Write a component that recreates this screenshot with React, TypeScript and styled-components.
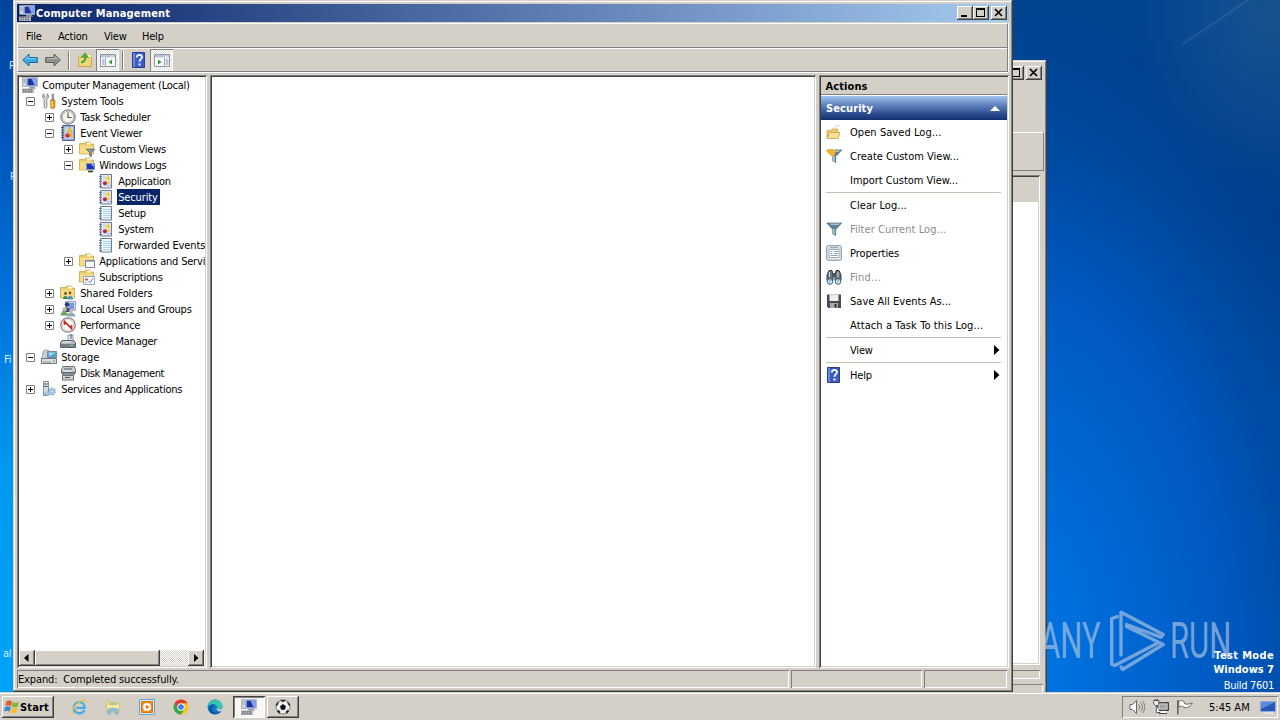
import React from "react";
import styled, { createGlobalStyle, css } from "styled-components";

const face = "#d4d0c8";
const shadow = "#808080";
const dark = "#404040";

const GlobalStyle = createGlobalStyle`
  * { box-sizing: border-box; }
  body {
    margin: 0;
    overflow: hidden;
    font: 11px "DejaVu Sans Condensed", "DejaVu Sans", sans-serif;
    letter-spacing: -0.22px;
    color: #000;
    cursor: default;
  }
  svg { display: block; flex: none; }
`;

const raised = css`
  background: ${face};
  box-shadow: inset -1px -1px ${dark}, inset 1px 1px #fff, inset -2px -2px ${shadow};
`;
const sunken = css`
  box-shadow: inset 1px 1px ${shadow}, inset -1px -1px #fff;
`;
const well = css`
  padding: 2px;
  box-shadow: inset 1px 1px ${shadow}, inset -1px -1px #fff, inset 2px 2px ${dark}, inset -2px -2px ${face};
`;

const Desktop = styled.div`
  position: relative;
  width: 1280px;
  height: 720px;
  overflow: hidden;
  background:
    linear-gradient(146deg, transparent 49%, rgba(255, 255, 255, 0.12) 49.6%, rgba(255, 255, 255, 0.02) 52%, transparent 56%) 1180px 0 / 70px 44px no-repeat,
    radial-gradient(ellipse 130px 170px at 1270px 20px, rgba(50, 100, 140, 0.45), rgba(50, 100, 140, 0)),
    radial-gradient(ellipse 360px 660px at 1010px 670px, #0078e6 0%, #0069d6 30%, #005cc4 55%, rgba(0, 78, 172, 0.7) 78%, rgba(0, 68, 150, 0) 100%),
    linear-gradient(180deg, #004490 0%, #003f8c 30%, #0050ac 100%);
`;
const LeftStrip = styled.div`
  width: 14px;
  height: 100%;
  background: linear-gradient(180deg, #00449c 0, #0050b4 15%, #0070d8 40%, #0098f0 65%, #00a4fa 100%);
`;

const Shortcut = styled.span<{ $x: number; $y: number }>`
  position: absolute;
  left: ${(p) => p.$x}px;
  top: ${(p) => p.$y}px;
  color: #d8ecff;
  line-height: 14px;
`;

/* windows */
const Window = styled.section<{ $x: number; $y: number; $w: number; $h: number }>`
  position: absolute;
  left: ${(p) => p.$x}px;
  top: ${(p) => p.$y}px;
  width: ${(p) => p.$w}px;
  height: ${(p) => p.$h}px;
  display: flex;
  flex-direction: column;
  padding: 4px;
  background: ${face};
  box-shadow: inset -1px -1px ${dark}, inset 1px 1px ${face}, inset -2px -2px ${shadow}, inset 2px 2px #fff;
`;

const TitleBar = styled.header<{ $plain?: boolean }>`
  display: flex;
  align-items: center;
  height: 18px;
  flex: none;
  padding: 0 ${(p) => (p.$plain ? 1 : 2)}px 0 2px;
  color: #fff;
  font-weight: bold;
  letter-spacing: 0.16px;
  background: ${(p) => (p.$plain ? face : "linear-gradient(90deg, #0a246a, #a6caf0)")};
`;
const TitleText = styled.span`
  flex: 1;
  margin-left: 1px;
`;
const CaptionButton = styled.span<{ $gap?: number }>`
  ${raised}
  width: 16px;
  height: 14px;
  margin-left: ${(p) => p.$gap ?? 0}px;
`;

const Bars = styled.div`
  flex: none;
  height: 49px;
  margin: 1px 1px 0 0;
  border: 1px solid;
  border-color: #fff ${shadow} ${shadow} #fff;
  box-shadow: 0 1px #fff, 1px 0 #fff;
  display: flex;
  flex-direction: column;
`;
const MenuBar = styled.nav`
  display: flex;
  align-items: center;
  height: 24px;
  padding: 2px 0 0 8px;
  border-bottom: 1px solid ${shadow};
`;
const MenuItem = styled.span<{ $w: number }>`
  width: ${(p) => p.$w}px;
`;
const ToolBar = styled.div`
  display: flex;
  align-items: flex-start;
  flex: 1;
  padding-left: 4px;
  border-top: 1px solid #fff;
`;
const Tool = styled.span<{ $pressed?: boolean; $w: number }>`
  display: flex;
  align-items: center;
  justify-content: center;
  width: ${(p) => p.$w}px;
  height: 22px;
  ${(p) => p.$pressed && css`
    background: repeating-conic-gradient(#fff 0 25%, #e4e1dc 0 50%) 0 0 / 2px 2px;
    ${sunken}
  `}
`;
const ToolDivider = styled.i<{ $l: number; $r: number }>`
  width: 2px;
  height: 19px;
  margin: 2px ${(p) => p.$r}px 0 ${(p) => p.$l}px;
  border-left: 1px solid ${shadow};
  border-right: 1px solid #fff;
`;

const Panes = styled.main`
  display: grid;
  grid-template-columns: 190px 606px 190px;
  column-gap: 3px;
  height: 593px;
  margin-top: 3px;
  flex: none;
`;
const Pane = styled.div`
  ${well}
  background: #fff;
  display: flex;
  flex-direction: column;
  min-width: 0;
  overflow: hidden;
`;
const TreeList = styled.ul`
  list-style: none;
  margin: 0;
  padding: 0;
  flex: 1;
  overflow: hidden;
`;
const TreeRow = styled.li<{ $level: number }>`
  display: flex;
  align-items: center;
  height: 16px;
  padding-left: ${(p) => (p.$level === 0 ? 3 : 3 + 19 * (p.$level - 1))}px;
  white-space: nowrap;
`;
const Twist = styled.span`
  width: 19px;
  padding-left: 4px;
  flex: none;
`;
const TreeLabel = styled.span<{ $selected?: boolean; $track?: number }>`
  margin-left: 3px;
  padding: 1px 2px 0 1.2px;
  line-height: 15px;
  letter-spacing: ${(p) => p.$track ?? -0.24}px;
  ${(p) => p.$selected && css`
    background: #0a246a;
    color: #fff;
  `}
`;
const ScrollBar = styled.div`
  display: flex;
  height: 16px;
  margin: 0 1px 0 0;
  background: repeating-conic-gradient(#fff 0 25%, ${face} 0 50%) 0 0 / 2px 2px;
`;
const ScrollButton = styled.span`
  ${raised}
  width: 16px;
  height: 16px;
`;
const Thumb = styled.span`
  ${raised}
  width: 125px;
`;
const TrackSpace = styled.span`
  flex: 1;
`;

const ActionsTitle = styled.div`
  height: 18px;
  padding: 1px 0 0 4.5px;
  font-weight: bold;
  letter-spacing: 0.1px;
  line-height: 17px;
  background: ${face};
  border-bottom: 1px solid ${shadow};
`;
const ActionsGroup = styled.div`
  display: flex;
  align-items: center;
  justify-content: space-between;
  height: 25px;
  padding: 1px 7px 0 5px;
  color: #fff;
  font-weight: bold;
  letter-spacing: 0.1px;
  border-top: 1px solid #fff;
  background: linear-gradient(180deg, #a0c4ee 0%, #6487c0 35%, #2c4c90 75%, #14306f 100%);
`;
const ActionRow = styled.div<{ $disabled?: boolean }>`
  display: flex;
  align-items: center;
  height: 24px;
  padding: 0 7px 0 5px;
  color: ${(p) => (p.$disabled ? "#8c8c8c" : "#000")};
`;
const ActionIcon = styled.span`
  width: 24px;
`;
const ActionText = styled.span<{ $track?: number }>`
  flex: 1;
  letter-spacing: ${(p) => p.$track ?? -0.2}px;
`;
const Rule = styled.i`
  height: 1px;
  margin: 0 6px 0 5px;
  background: #c4c0b8;
`;

const StatusBar = styled.footer`
  display: flex;
  gap: 2px;
  height: 19px;
  margin-top: 1px;
  padding-top: 1px;
  flex: none;
`;
const StatusCell = styled.span<{ $w: number }>`
  ${sunken}
  width: ${(p) => p.$w}px;
  padding: 1px 0 0 1px;
  line-height: 17px;
  letter-spacing: -0.14px;
`;

/* background window */
const BackBand = styled.div<{ $h: number; $top: number; $right: number }>`
  flex: none;
  height: ${(p) => p.$h}px;
  margin: ${(p) => p.$top}px ${(p) => p.$right}px 0 0;
  border: 1px solid;
  border-color: #fff ${shadow} ${shadow} #fff;
`;
const BackList = styled.div`
  ${well}
  flex: none;
  height: 490px;
  margin: 4px 3px 0 0;
  background: linear-gradient(${face} 27px, #fff 27px);
`;
const BackStatus = styled.div<{ $h: number; $top: number; $right: number }>`
  ${sunken}
  flex: none;
  height: ${(p) => p.$h}px;
  margin: ${(p) => p.$top}px ${(p) => p.$right}px 0 0;
`;

/* watermark and build note */
const Watermark = styled.div`
  position: absolute;
  left: 1040px;
  top: 608px;
  display: flex;
  align-items: center;
  height: 66px;
  color: #bccde2;
  opacity: 0.62;
`;
const MarkWord = styled.span`
  width: 62px;
  font: 400 50px/66px Roboto, sans-serif;
  letter-spacing: 0;
  white-space: nowrap;
  transform: scaleX(0.62);
  transform-origin: 0 50%;
`;
const BuildNote = styled.div`
  position: absolute;
  right: 6px;
  top: 649px;
  color: #fff;
  text-align: right;
  line-height: 14px;
  font-weight: bold;
  letter-spacing: 0.1px;
`;
const NoteLine = styled.div<{ $track?: number }>`
  letter-spacing: ${(p) => p.$track ?? 0}px;
`;
const BuildNumber = styled.div`
  margin-top: 2px;
  font-weight: normal;
  letter-spacing: -0.3px;
`;

/* taskbar */
const TaskBar = styled.footer`
  position: absolute;
  left: 0;
  bottom: 0;
  width: 1280px;
  height: 28px;
  display: flex;
  align-items: center;
  padding: 2px 2px 0;
  background: ${face};
  box-shadow: inset 0 1px ${face}, inset 0 2px #fff;
`;
const StartButton = styled.span`
  ${raised}
  display: flex;
  align-items: center;
  width: 52px;
  height: 22px;
  padding-left: 2px;
  font-weight: bold;
  letter-spacing: 0.15px;
`;
const QuickLaunch = styled.span`
  display: flex;
  gap: 18px;
  margin: 0 10px 0 17px;
`;
const TaskButton = styled.span<{ $active?: boolean }>`
  display: flex;
  align-items: center;
  justify-content: center;
  width: 32px;
  height: 22px;
  margin-right: 2px;
  ${raised}
  ${(p) => p.$active && css`
    background: #f8f7f5;
    box-shadow: inset 1px 1px ${dark}, inset -1px -1px #fff, inset 2px 2px ${shadow};
  `}
`;
const Tray = styled.span`
  ${sunken}
  display: flex;
  align-items: center;
  gap: 8px;
  width: 156px;
  height: 22px;
  margin-left: auto;
  padding-left: 7px;
`;
const Clock = styled.span`
  width: 43px;
  margin-left: 8px;
  letter-spacing: 0;
  white-space: nowrap;
`;

type Draw = () => React.ReactElement;
const Ic = ({ children, s = 16 }: { children: React.ReactNode; s?: number }) => (
  <svg width={s} height={s} viewBox="0 0 16 16">{children}</svg>
);

const ComputerIcon: Draw = () => (
  <Ic>
    <path d="M.5.5h4v9h-4z" fill="#cfd6dd" stroke="#8b96a3" strokeWidth=".7" />
    <path d="M1.500 3h2M1.500 5h2" stroke="#6f7c8c" strokeWidth=".8" />
    <path d="M4.500.5h11v9h-11z" fill="#e6eaf2" stroke="#a3acbc" strokeWidth=".8" />
    <path d="M5.500 1.500h9v7h-9z" fill="#1c35a4" />
    <path d="M9.500 1.500h5v7h-2z" fill="#86a2ea" />
    <path d="M7.500 10h5l1.500 1.800H6.500z" fill="#8d97a4" />
    <path d="M0 11.500h12V16H0z" fill="#b4b7b6" />
    <path d="M1 12.800h10M1 14.800h10" stroke="#5a6068" strokeDasharray="1.600 .9" />
  </Ic>
);
const ToolsIcon: Draw = () => (
  <Ic>
    <path d="M3 .8v3l1.500 1L6 3.800V.8c1.700.7 2 3.400.5 5l-.7.8v7c0 2-2.600 2-2.600 0v-7l-.7-.8C1 4.200 1.300 1.500 3 .8z" fill="#e8e8e8" stroke="#777" strokeWidth=".9" />
    <path d="M11 1h1.600v6H11z" fill="#999" stroke="#777" strokeWidth=".5" />
    <path d="M9.800 7h4v7c0 2-4 2-4 0z" fill="#f0a020" stroke="#a86408" strokeWidth=".8" />
    <path d="M11 8v6" stroke="#ffe080" />
  </Ic>
);
const ClockIcon: Draw = () => (
  <Ic>
    <circle cx="8" cy="8" r="7.300" fill="#c8c8c8" stroke="#808080" />
    <circle cx="8" cy="8" r="5.500" fill="#fbf6e8" stroke="#a9a9a9" strokeWidth=".6" />
    <path d="M8 3.500V8.500h3.500" stroke="#4a5568" strokeWidth="1.100" fill="none" />
  </Ic>
);
const BookIcon: Draw = () => (
  <Ic>
    <path d="M2.500.5h12v15h-12z" fill="#93a7d6" stroke="#596690" />
    <path d="M4.500 2h8.500v12H4.500z" fill="#cbd6ee" />
    <path d="M9.500 2l2.800 5H7z" fill="#f4cf34" stroke="#b58c12" strokeWidth=".5" />
    <circle cx="7.500" cy="10.500" r="2.300" fill="#cc3434" />
    <path d="M9.500 7.500H12.500v5h-2.500z" fill="#e9b040" />
    <path d="M1 2.500h3M1 5h3M1 7.500h3M1 10h3M1 12.500h3" stroke="#4d5677" />
  </Ic>
);
const Folder = () => (
  <>
    <path d="M.5 2.500h5l1-1.500h5v2h3v10H.5z" fill="#e9c765" stroke="#c9a850" strokeWidth=".8" />
    <path d="M1 4.500h13v8H1z" fill="#f7dc88" />
    <path d="M8 1.500h4v2H8z" fill="#fff8dc" />
  </>
);
const FolderFilterIcon: Draw = () => (
  <Ic><Folder /><path d="M7 8h9l-3.500 3.500V16l-2-1.500v-3z" fill="#8a939b" stroke="#555d64" strokeWidth=".6" /></Ic>
);
const FolderMonitorIcon: Draw = () => (
  <Ic><Folder /><path d="M7.500 6.500h8v6h-8z" fill="#1c36c8" stroke="#8a93b8" /><path d="M12 7h3v3z" fill="#9db4f4" /><path d="M9 14.500h5" stroke="#333" strokeWidth="1.500" /></Ic>
);
const FolderWindowIcon: Draw = () => (
  <Ic><Folder /><path d="M6.500 7.500h9v7h-9z" fill="#fff" stroke="#7781a0" /><path d="M7 8.500h8" stroke="#9eb2dc" /></Ic>
);
const FolderEventIcon: Draw = () => (
  <Ic><Folder /><path d="M4.500 7.500h11v8h-11z" fill="#f4f7fc" stroke="#96a6c4" /><path d="M6 9.500h3v2H6z" fill="#d85858" /><path d="M9.500 12l1.500 1.500 3-4" stroke="#5a82c8" fill="none" /><path d="M5.500 13.500h3" stroke="#b8c4da" /></Ic>
);
const LogIcon: Draw = () => (
  <Ic>
    <path d="M2.500 1.500h11v13.500h-11z" fill="#dfe6f3" stroke="#6e7897" />
    <path d="M7 7l3-4.500 3 4.500z" fill="#f0d23c" />
    <circle cx="7" cy="10.300" r="2.100" fill="#b8323e" />
    <path d="M9.500 8.500h2.500v2H9.500z" fill="#eecb47" />
    <path d="M9 12.500h4M5 4.500h2.500" stroke="#a9b8da" />
    <path d="M1 3.500h3M1 6h3M1 8.500h3M1 11h3M1 13.500h3" stroke="#6d789e" />
  </Ic>
);
const PlainLogIcon: Draw = () => (
  <Ic>
    <path d="M2.500 1.500h11v13.500h-11z" fill="#f2f9fc" stroke="#6e7897" />
    <path d="M5 4.500h8M5 6.500h8M5 8.500h8M5 10.500h8M5 12.500h8" stroke="#a9d3e0" />
    <path d="M1 3.500h3M1 6h3M1 8.500h3M1 11h3M1 13.500h3" stroke="#6d789e" />
  </Ic>
);
const SharedIcon: Draw = () => (
  <Ic>
    <Folder />
    <circle cx="5.500" cy="8.500" r="1.400" fill="#4a5b48" /><path d="M3 14c0-4 5-4 5 0z" fill="#3a8a50" />
    <circle cx="10" cy="8" r="1.400" fill="#7a5a30" /><path d="M7.500 14.500c0-5 5.500-5 5.500 0z" fill="#4b96b8" />
  </Ic>
);
const UsersIcon: Draw = () => (
  <Ic>
    <path d="M5.500.5h10v9h-10z" fill="#c5d1ea" stroke="#9aa7c0" />
    <path d="M9 2h5v6H9z" fill="#7f9ad2" />
    <circle cx="7" cy="3.500" r="2.300" fill="#2b3a78" />
    <path d="M2.500 11c0-6 8-6 9 0z" fill="#2f48a0" />
    <circle cx="4.500" cy="8.500" r="2.200" fill="#d8b888" />
    <path d="M.5 14.500c0-5 7-5 8 0z" fill="#6aa858" />
    <circle cx="11" cy="10" r="2" fill="#c8b8a0" />
    <path d="M7 15.500c0-5 8-5 8.500 0z" fill="#8fa8b4" />
  </Ic>
);
const PerfIcon: Draw = () => (
  <Ic>
    <circle cx="8" cy="8" r="7.200" fill="#fff" stroke="#858585" strokeWidth="1.300" />
    <circle cx="8" cy="8" r="5.500" fill="#fff" stroke="#dba8a8" strokeWidth=".7" />
    <path d="M4.500 8V4.500l7 7V8" stroke="#d32020" strokeWidth="1.600" fill="none" />
  </Ic>
);
const DeviceIcon: Draw = () => (
  <Ic>
    <path d="M8 7V2h5v6" fill="#e8eaee" stroke="#8e959e" />
    <path d="M11 1v5" stroke="#555" />
    <path d="M2 7.500h11l2.500 2v5H.5v-4.500z" fill="#b4bbc2" stroke="#5b646e" />
    <path d="M1 11h14v3H1z" fill="#747f8a" />
    <path d="M3 9h8" stroke="#eef1f4" />
    <path d="M10 12.500h3" stroke="#68e070" />
  </Ic>
);
const StorageIcon: Draw = () => (
  <Ic>
    <path d="M2 2.500C4 .5 7 .5 8 2v9H1z" fill="#c8d0d6" stroke="#808a92" strokeWidth=".7" />
    <path d="M6.500 2.500h9v6h-9z" fill="#4da6d8" stroke="#7d8994" />
    <path d="M7.500 3.500h7l-6 4z" fill="#a8dcf4" />
    <path d="M.5 9.500h15v5H.5z" fill="#dadde0" stroke="#70797f" />
    <path d="M2 13h8" stroke="#8d969c" /><path d="M12 12h2" stroke="#38a848" />
  </Ic>
);
const DiskIcon: Draw = () => (
  <Ic>
    <path d="M3 1.500h11l1.500 3v3H1.500v-3z" fill="#c6cacd" stroke="#6b7175" />
    <path d="M1.500 7.500h14l-2 3h-10z" fill="#8b9196" stroke="#5c6266" />
    <path d="M2.500 10.500h11v4.500h-11z" fill="#d0d3d5" stroke="#6b7175" />
    <path d="M4 4h8M5 12.500h5" stroke="#555b60" /><path d="M4 6h7" stroke="#fff" />
  </Ic>
);
const ServicesIcon: Draw = () => (
  <Ic>
    <path d="M2.500.5h5v14h-5z" fill="#d8dde2" stroke="#88919a" />
    <path d="M3 3h4M3 5.500h4" stroke="#5c6670" /><path d="M3 13h4" stroke="#57a8a0" />
    <circle cx="11" cy="10.500" r="3.200" fill="#b9d6ee" stroke="#7ea6ca" strokeWidth="1.500" strokeDasharray="1.800 1" />
    <circle cx="11" cy="10.500" r="1.200" fill="#fff" stroke="#6a96be" strokeWidth=".6" />
    <circle cx="6.500" cy="12.500" r="2" fill="#a9cbe6" stroke="#7ea6ca" strokeDasharray="1 .7" />
  </Ic>
);

const ArrowIcon = ({ fill, line, flip }: { fill: string; line: string; flip?: boolean }) => (
  <Ic>
    <path d="M.7 8L7 2v3.500h8.300v5H7V14z" transform={flip ? "translate(16 0) scale(-1 1)" : undefined} fill={fill} stroke={line} />
    <path d="M3 7.500L6 4.700v2h8" transform={flip ? "translate(16 0) scale(-1 1)" : undefined} stroke="#fff" opacity=".45" fill="none" />
  </Ic>
);
const FolderUpIcon: Draw = () => (
  <Ic>
    <path d="M1.500 5.500h5l1-1.500h7v10.500h-13z" fill="#f4d47a" stroke="#c9a850" />
    <path d="M10 2.500h4.500v3H10z" fill="#fff3c0" stroke="#d8bc70" strokeWidth=".6" />
    <path d="M4 10.500c3-.5 4.500-2.500 4.500-5.500" stroke="#3faa2c" strokeWidth="2" fill="none" />
    <path d="M4.500 5L8 .8 11.500 5.500z" fill="#4cb838" stroke="#2f8a20" strokeWidth=".5" />
  </Ic>
);
const PaneIcon = ({ right }: { right?: boolean }) => (
  <Ic>
    <path d="M.5 2.500h15v12H.5z" fill="#fbfbfb" stroke="#8d96a8" />
    <path d="M1 3h14v2.500H1z" fill="#bac6d8" />
    <path d="M11 4.200h3" stroke="#fff" strokeDasharray="1 .7" />
    <path d={right ? "M10.500 6v8" : "M5.500 6v8"} stroke="#9da6b6" />
    <path d={right ? "M11.500 8h3M11.500 10h3M11.500 12h3" : "M2 8h2.500M2 10h2.500M2 12h2.500"} stroke="#8290a8" />
    <path d={right ? "M4 7.500L7.500 10 4 12.500z" : "M12 7.500L8.500 10l3.500 2.500z"} fill="#2d9a30" />
  </Ic>
);
const HelpIcon: Draw = () => (
  <Ic>
    <path d="M1.500.5h12v15h-12z" fill="#3a5cc4" stroke="#24408e" />
    <path d="M2 1h2v14H2z" fill="#6c8ae0" />
    <path d="M5.800 5.500c0-3.400 5.200-3.400 5.200-.4 0 2-2.500 2-2.500 4.600" stroke="#fff" strokeWidth="1.800" fill="none" />
    <path d="M7.500 11.500h2v2h-2z" fill="#fff" />
  </Ic>
);
const OpenFolderIcon: Draw = () => (
  <Ic>
    <path d="M1 14V6.500h4l1-1.500h5.500v3" fill="#efcb70" stroke="#c9a04a" strokeWidth=".8" />
    <path d="M3.500 8.500h10.500L12 14.500H1z" fill="#fae09a" stroke="#c89c40" strokeWidth=".8" />
    <path d="M8 3.500c2-2 4-2 6-1.500" stroke="#b5c4c8" fill="none" strokeWidth=".8" />
  </Ic>
);
const FunnelIcon = ({ gold }: { gold?: boolean }) => (
  <Ic>
    <path d="M.8 2h14.900L9.700 8.500v6L6.800 13V8.500z" fill="#5d8199" stroke="#4c6a80" strokeWidth=".7" />
    <path d="M4 2.500h10l-1.500 1.500H5z" fill="#a9c4d4" />
    <path d="M7.200 8h1.500v5.500H7.200z" fill="#b5cedb" />
    {gold && <path d="M0 2.500L5 1l5 1.500L8.500 7 7 9 3 6z" fill="#f2b22a" />}
  </Ic>
);
const PropertiesIcon: Draw = () => (
  <Ic>
    <rect x=".7" y=".7" width="14.600" height="14.600" rx="1.500" fill="#dfe6ec" stroke="#8894a0" />
    <path d="M3 4.500h10v8H3z" fill="#fff" stroke="#8c9dad" strokeWidth=".8" />
    <path d="M4.500 6.500h2M8 6.500h4M4.500 8.500h2M8 8.500h4M4.500 10.500h7M4 2.700h8" stroke="#7d95ae" strokeWidth=".9" />
  </Ic>
);
const BinocularsIcon: Draw = () => (
  <Ic>
    <path d="M3 1.500h3l1 4v6H1V6zM10 1.500h3L15 6v5.500H9v-6z" fill="#6c747c" stroke="#353c42" />
    <path d="M6.500 4h3v4h-3z" fill="#4a5258" />
    <path d="M3.500 3v5M12 3v5" stroke="#d6dce0" />
    <circle cx="4" cy="12.500" r="2.800" fill="#cfe6f3" stroke="#38617c" /><circle cx="12" cy="12.500" r="2.800" fill="#cfe6f3" stroke="#38617c" />
    <path d="M3 13l2-2M11 13l2-2" stroke="#5297c0" />
  </Ic>
);
const SaveIcon: Draw = () => (
  <Ic>
    <path d="M1 1.500h14v13.500H2.500L1 13.500z" fill="#4b4b4f" />
    <path d="M3.500 1.500h9v6.500h-9z" fill="#eceef0" />
    <path d="M4 10h8v5H4z" fill="#a9abb0" /><path d="M8.500 11h2v3.500h-2z" fill="#29292c" />
  </Ic>
);

const FlagLogo: Draw = () => (
  <Ic>
    <path d="M2.500 2.300c2-1.300 4-1 5.500.2L7 7.200c-1.800-1.200-3.700-1.400-5.700-.3z" fill="#e8582a" />
    <path d="M8.800 2.800c1.800 1.200 4 1.200 6.200 0l-1.200 4.800c-2 1.200-4.200 1.100-6.100-.1z" fill="#80b83a" />
    <path d="M1 7.900c2-1.200 4-.9 5.700.3l-1.200 4.500c-1.800-1.200-3.700-1.300-5.500-.2z" fill="#3c84d8" />
    <path d="M7.500 8.600c1.800 1.100 4 1.200 6 .1l-1.200 4.700c-2 1.100-4.200 1-6-.2z" fill="#f6bd2c" />
  </Ic>
);
const IeIcon: Draw = () => (
  <Ic>
    <path d="M13.500 11c-2.600 5.200-10.700 4-10.700-2.500 0-6.800 10.800-7.400 11 .3H5" stroke="#45ace4" strokeWidth="2.300" fill="none" />
    <path d="M2 15C-1 13 4 4.500 11 1.500c3-1.300 4.600-.2 3.500 2.300" stroke="#efc03a" strokeWidth="1.200" fill="none" />
  </Ic>
);
const ExplorerIcon: Draw = () => (
  <Ic>
    <path d="M1.500 2.500h5l1 1.500h7v9h-13z" fill="#f6dc8a" stroke="#e0c070" />
    <path d="M4 3.500h8v3H4z" fill="#a5cc88" /><path d="M2 6h12v4H2z" fill="#fae7a4" />
    <path d="M3 15V10.500c0-1.500 10-1.500 10 0V15h-2.500v-3h-5v3z" fill="#8dc4e8" stroke="#5c9ece" strokeWidth=".6" />
  </Ic>
);
const MediaIcon: Draw = () => (
  <Ic>
    <path d="M.5.5h15v15H.5z" fill="#d9ebf7" stroke="#5fa4d6" />
    <path d="M2.500 2.500h11v11h-11z" fill="#f58a1c" stroke="#da7310" />
    <circle cx="8" cy="8" r="4" fill="#fff" /><path d="M6.800 5.800L10.500 8l-3.700 2.200z" fill="#e87512" />
  </Ic>
);
const ChromeIcon: Draw = () => (
  <Ic>
    <circle cx="8" cy="8" r="7.500" fill="#fbc116" />
    <path d="M1.500 4.250A7.500 7.500 0 0 1 14.500 4.250H8L4.750 9.900z" fill="#e33b2e" />
    <path d="M1.500 4.250A7.500 7.500 0 0 0 8 15.500l3.250-5.600H4.750z" fill="#2da94f" />
    <circle cx="8" cy="8" r="3.700" fill="#fff" /><circle cx="8" cy="8" r="2.800" fill="#3b7ded" />
  </Ic>
);
const EdgeIcon: Draw = () => (
  <Ic>
    <circle cx="8" cy="8" r="7.500" fill="#1478c8" />
    <path d="M.6 7.500C1.500-1.500 14.800-1.500 15.500 7c.2 3-4 4-6 2.500 1.500-2-.5-4.500-3.500-4.500-2.500 0-4.500 1-5.400 2.500z" fill="#38c4b0" />
    <path d="M5.500 8c-2 4 2.500 7.500 8.500 4.500-3 4.500-12 3.500-12-2.500C2 7 4.500 5.500 7 5.500z" fill="#0c56a8" />
    <path d="M9.500 9.500c2 1.500 5 .8 6-1-.2 2-1 3-1.800 3.800-2.200.4-4-.8-4.200-2.800z" fill="#d4d0c8" />
  </Ic>
);
const BallIcon: Draw = () => (
  <Ic>
    <circle cx="8" cy="8" r="7" fill="#f0f0f0" stroke="#666" strokeWidth=".8" />
    <path d="M8 5l3 2.200-1.100 3.500H6.100L5 7.200z" fill="#111" />
    <path d="M5.500 1.300h5L8 3zM15 6.500l-1.500-.5-1-3.200L14.500 5zM13.500 12.800l-2 1.700-.5-2 2-1.500zM2.500 12.800l2 1.700.5-2L3 11zM1 6.500L2.500 6l1-3.200L1.500 5z" fill="#222" stroke="#222" strokeWidth=".6" />
  </Ic>
);
const SpeakerIcon: Draw = () => (
  <Ic>
    <path d="M1 5.500h2.500L7.500 1.500v13l-4-4H1z" fill="#fff" stroke="#666" />
    <path d="M9.500 5.500c1.400 1.500 1.400 3.500 0 5M11.500 3.500c2.600 2.700 2.600 6.300 0 9M13.500 2c3 3.500 3 8.500 0 12" stroke="#777" fill="none" />
  </Ic>
);
const NetworkIcon: Draw = () => (
  <Ic>
    <path d="M4.500 3.500h11v8h-11z" fill="#777" stroke="#444" /><path d="M6 5h8v5H6z" fill="#a2a2a2" stroke="#e4e4e4" strokeWidth=".8" />
    <path d="M.8 1.500h5V5L4.500 6.500h-2L.8 5zM3.300 6.500v7H7" fill="#fff" stroke="#555" />
    <path d="M2.300 0v2M4.300 0v2M6 14.500h8" stroke="#444" /><path d="M8 12h5v2H8z" fill="#fff" />
  </Ic>
);
const FlagIcon: Draw = () => (
  <Ic>
    <path d="M.8 1v14.500" stroke="#555" strokeWidth="1.400" />
    <path d="M1.800 2.500c2-1.400 4-1 5.500.5v1.500c2 1 4.500.8 8-.5-1.500 3.500-4.500 5-8.500 4.500V8c-1.700-1.200-3.300-1-5 .2z" fill="#fff" stroke="#666" />
  </Ic>
);
const ScreenIcon: Draw = () => (
  <Ic>
    <path d="M.5 2.500h15v10H.5z" fill="#2858b8" stroke="#8faad8" />
    <path d="M1 3h14L1 10z" fill="#5d8bdc" /><path d="M3 14h10" stroke="#e8e8e8" strokeWidth="1.500" />
  </Ic>
);

const Expander = ({ open }: { open: boolean }) => (
  <svg width="9" height="9" viewBox="0 0 9 9">
    <path d="M.5.5h8v8h-8z" fill="#fff" stroke="#808080" />
    <path d={open ? "M2 4.500h5" : "M2 4.500h5M4.500 2v5"} stroke="#000" />
  </svg>
);
const CaptionGlyph = ({ kind }: { kind: "min" | "max" | "close" }) => (
  <svg width="16" height="14" viewBox="0 0 16 14" shapeRendering={kind === "close" ? "auto" : "crispEdges"}>
    {kind === "min" && <path d="M4 9h6v2H4z" />}
    {kind === "max" && <path d="M3 2h9v9H3zM4 4v6h7V4z" fillRule="evenodd" />}
    {kind === "close" && <path d="M4 3l7 7M11 3l-7 7" stroke="#000" strokeWidth="1.700" />}
  </svg>
);
const ScrollGlyph = ({ right }: { right?: boolean }) => (
  <svg width="16" height="16" viewBox="0 0 16 16">
    <path d={right ? "M6 4l4.500 4L6 12z" : "M9.500 4L5 8l4.500 4z"} />
  </svg>
);
const Caret = () => (
  <svg width="7" height="10" viewBox="0 0 7 10"><path d="M1 0v10l5.500-5z" /></svg>
);

type Node = { l: number; t: string; icon: Draw; open?: boolean; sel?: boolean; track?: number };
const tree: Node[] = [
  { l: 0, t: "Computer Management (Local)", icon: ComputerIcon },
  { l: 1, t: "System Tools", icon: ToolsIcon, open: true, track: -0.16 },
  { l: 2, t: "Task Scheduler", icon: ClockIcon, open: false },
  { l: 2, t: "Event Viewer", icon: BookIcon, open: true },
  { l: 3, t: "Custom Views", icon: FolderFilterIcon, open: false },
  { l: 3, t: "Windows Logs", icon: FolderMonitorIcon, open: true },
  { l: 4, t: "Application", icon: LogIcon },
  { l: 4, t: "Security", icon: LogIcon, sel: true, track: -0.14 },
  { l: 4, t: "Setup", icon: PlainLogIcon },
  { l: 4, t: "System", icon: LogIcon },
  { l: 4, t: "Forwarded Events", icon: PlainLogIcon, track: -0.1 },
  { l: 3, t: "Applications and Services Logs", icon: FolderWindowIcon, open: false, track: -0.2 },
  { l: 3, t: "Subscriptions", icon: FolderEventIcon },
  { l: 2, t: "Shared Folders", icon: SharedIcon, open: false, track: -0.1 },
  { l: 2, t: "Local Users and Groups", icon: UsersIcon, open: false },
  { l: 2, t: "Performance", icon: PerfIcon, open: false },
  { l: 2, t: "Device Manager", icon: DeviceIcon },
  { l: 1, t: "Storage", icon: StorageIcon, open: true, track: -0.1 },
  { l: 2, t: "Disk Management", icon: DiskIcon, track: -0.38 },
  { l: 1, t: "Services and Applications", icon: ServicesIcon, open: false },
];

type Action = { t: string; icon?: Draw; off?: boolean; more?: boolean; rule?: boolean; track?: number };
const actions: Action[] = [
  { t: "Open Saved Log...", icon: OpenFolderIcon, track: 0.06 },
  { t: "Create Custom View...", icon: () => <FunnelIcon gold />, track: 0 },
  { t: "Import Custom View...", rule: true, track: -0.04 },
  { t: "Clear Log...", track: 0.06 },
  { t: "Filter Current Log...", icon: () => <FunnelIcon />, off: true, track: 0.06 },
  { t: "Properties", icon: PropertiesIcon, track: -0.08 },
  { t: "Find...", icon: BinocularsIcon, off: true, track: 0.2 },
  { t: "Save All Events As...", icon: SaveIcon, track: 0.02 },
  { t: "Attach a Task To this Log...", rule: true, track: 0.1 },
  { t: "View", more: true, rule: true },
  { t: "Help", icon: HelpIcon, more: true },
];

const BackWindow = () => (
  <Window $x={700} $y={60} $w={347} $h={640}>
    <TitleBar $plain>
      <TitleText />
      <CaptionButton><CaptionGlyph kind="max" /></CaptionButton>
      <CaptionButton $gap={2}><CaptionGlyph kind="close" /></CaptionButton>
    </TitleBar>
    <BackBand $h={39} $top={50} $right={-1} />
    <BackList />
    <BackStatus $h={9} $top={5} $right={3} />
    <BackStatus $h={20} $top={5} $right={0} />
  </Window>
);

const ManagementWindow = () => (
  <Window $x={13} $y={0} $w={1000} $h={692}>
    <TitleBar>
      <ComputerIcon />
      <TitleText>Computer Management</TitleText>
      <CaptionButton><CaptionGlyph kind="min" /></CaptionButton>
      <CaptionButton><CaptionGlyph kind="max" /></CaptionButton>
      <CaptionButton $gap={2}><CaptionGlyph kind="close" /></CaptionButton>
    </TitleBar>
    <Bars>
      <MenuBar>
        <MenuItem $w={32}>File</MenuItem>
        <MenuItem $w={46}>Action</MenuItem>
        <MenuItem $w={38}>View</MenuItem>
        <MenuItem $w={30}>Help</MenuItem>
      </MenuBar>
      <ToolBar>
        <Tool $w={16}><ArrowIcon fill="#36a9e4" line="#1a6ea6" /></Tool>
        <Tool $w={30}><ArrowIcon fill="#8e8e8e" line="#5f5f5f" flip /></Tool>
        <ToolDivider $l={0} $r={4} />
        <Tool $w={22}><FolderUpIcon /></Tool>
        <Tool $w={23} $pressed><PaneIcon /></Tool>
        <ToolDivider $l={3} $r={3} />
        <Tool $w={23}><HelpIcon /></Tool>
        <Tool $w={23} $pressed><PaneIcon right /></Tool>
      </ToolBar>
    </Bars>
    <Panes>
      <Pane>
        <TreeList>
          {tree.map(({ l, t, icon: Icon, open, sel, track }) => (
            <TreeRow key={t} $level={l}>
              {l > 0 && <Twist>{open !== undefined && <Expander open={open} />}</Twist>}
              <Icon />
              <TreeLabel $selected={sel} $track={track}>{t}</TreeLabel>
            </TreeRow>
          ))}
        </TreeList>
        <ScrollBar>
          <ScrollButton><ScrollGlyph /></ScrollButton>
          <Thumb />
          <TrackSpace />
          <ScrollButton><ScrollGlyph right /></ScrollButton>
        </ScrollBar>
      </Pane>
      <Pane />
      <Pane>
        <ActionsTitle>Actions</ActionsTitle>
        <ActionsGroup>
          Security
          <svg width="10" height="5" viewBox="0 0 10 5"><path d="M0 5l5-5 5 5z" fill="#fff" /></svg>
        </ActionsGroup>
        {actions.map(({ t, icon: Icon, off, more, rule, track }) => (
          <React.Fragment key={t}>
            <ActionRow $disabled={off}>
              <ActionIcon>{Icon && <Icon />}</ActionIcon>
              <ActionText $track={track}>{t}</ActionText>
              {more && <Caret />}
            </ActionRow>
            {rule && <Rule />}
          </React.Fragment>
        ))}
      </Pane>
    </Panes>
    <StatusBar>
      <StatusCell $w={772}>Expand:&nbsp; Completed successfully.</StatusCell>
      <StatusCell $w={131} />
      <StatusCell $w={83} />
    </StatusBar>
  </Window>
);

export default function App() {
  return (
    <Desktop>
      <GlobalStyle />
      <LeftStrip />
      <Shortcut $x={9} $y={59}>P</Shortcut>
      <Shortcut $x={10} $y={170}>P</Shortcut>
      <Shortcut $x={4} $y={353}>Fi</Shortcut>
      <Shortcut $x={3} $y={647}>al</Shortcut>
      <BackWindow />
      <ManagementWindow />
      <Watermark>
        <MarkWord>ANY</MarkWord>
        <svg width="68" height="66" viewBox="0 0 68 66" fill="none" stroke="currentColor" strokeWidth="3.400" strokeLinejoin="round" strokeLinecap="round">
          <path d="M15.300 8.700L9.700 10.500V56l3 1.500 43.500-22.700M19 47V4.200l42.300 22.300-2.600 2.700L24.500 16.500M24.500 18.500l36.800 18L20.700 61.500 19 59" />
        </svg>
        <MarkWord>RUN</MarkWord>
      </Watermark>
      <BuildNote>
        <NoteLine $track={0.35}>Test Mode</NoteLine>
        <NoteLine>Windows 7</NoteLine>
        <BuildNumber>Build 7601</BuildNumber>
      </BuildNote>
      <TaskBar>
        <StartButton><FlagLogo />Start</StartButton>
        <QuickLaunch><IeIcon /><ExplorerIcon /><MediaIcon /><ChromeIcon /><EdgeIcon /></QuickLaunch>
        <TaskButton $active><ComputerIcon /></TaskButton>
        <TaskButton><BallIcon /></TaskButton>
        <Tray>
          <SpeakerIcon /><NetworkIcon /><FlagIcon />
          <Clock>5:45 AM</Clock>
          <ScreenIcon />
        </Tray>
      </TaskBar>
    </Desktop>
  );
}
